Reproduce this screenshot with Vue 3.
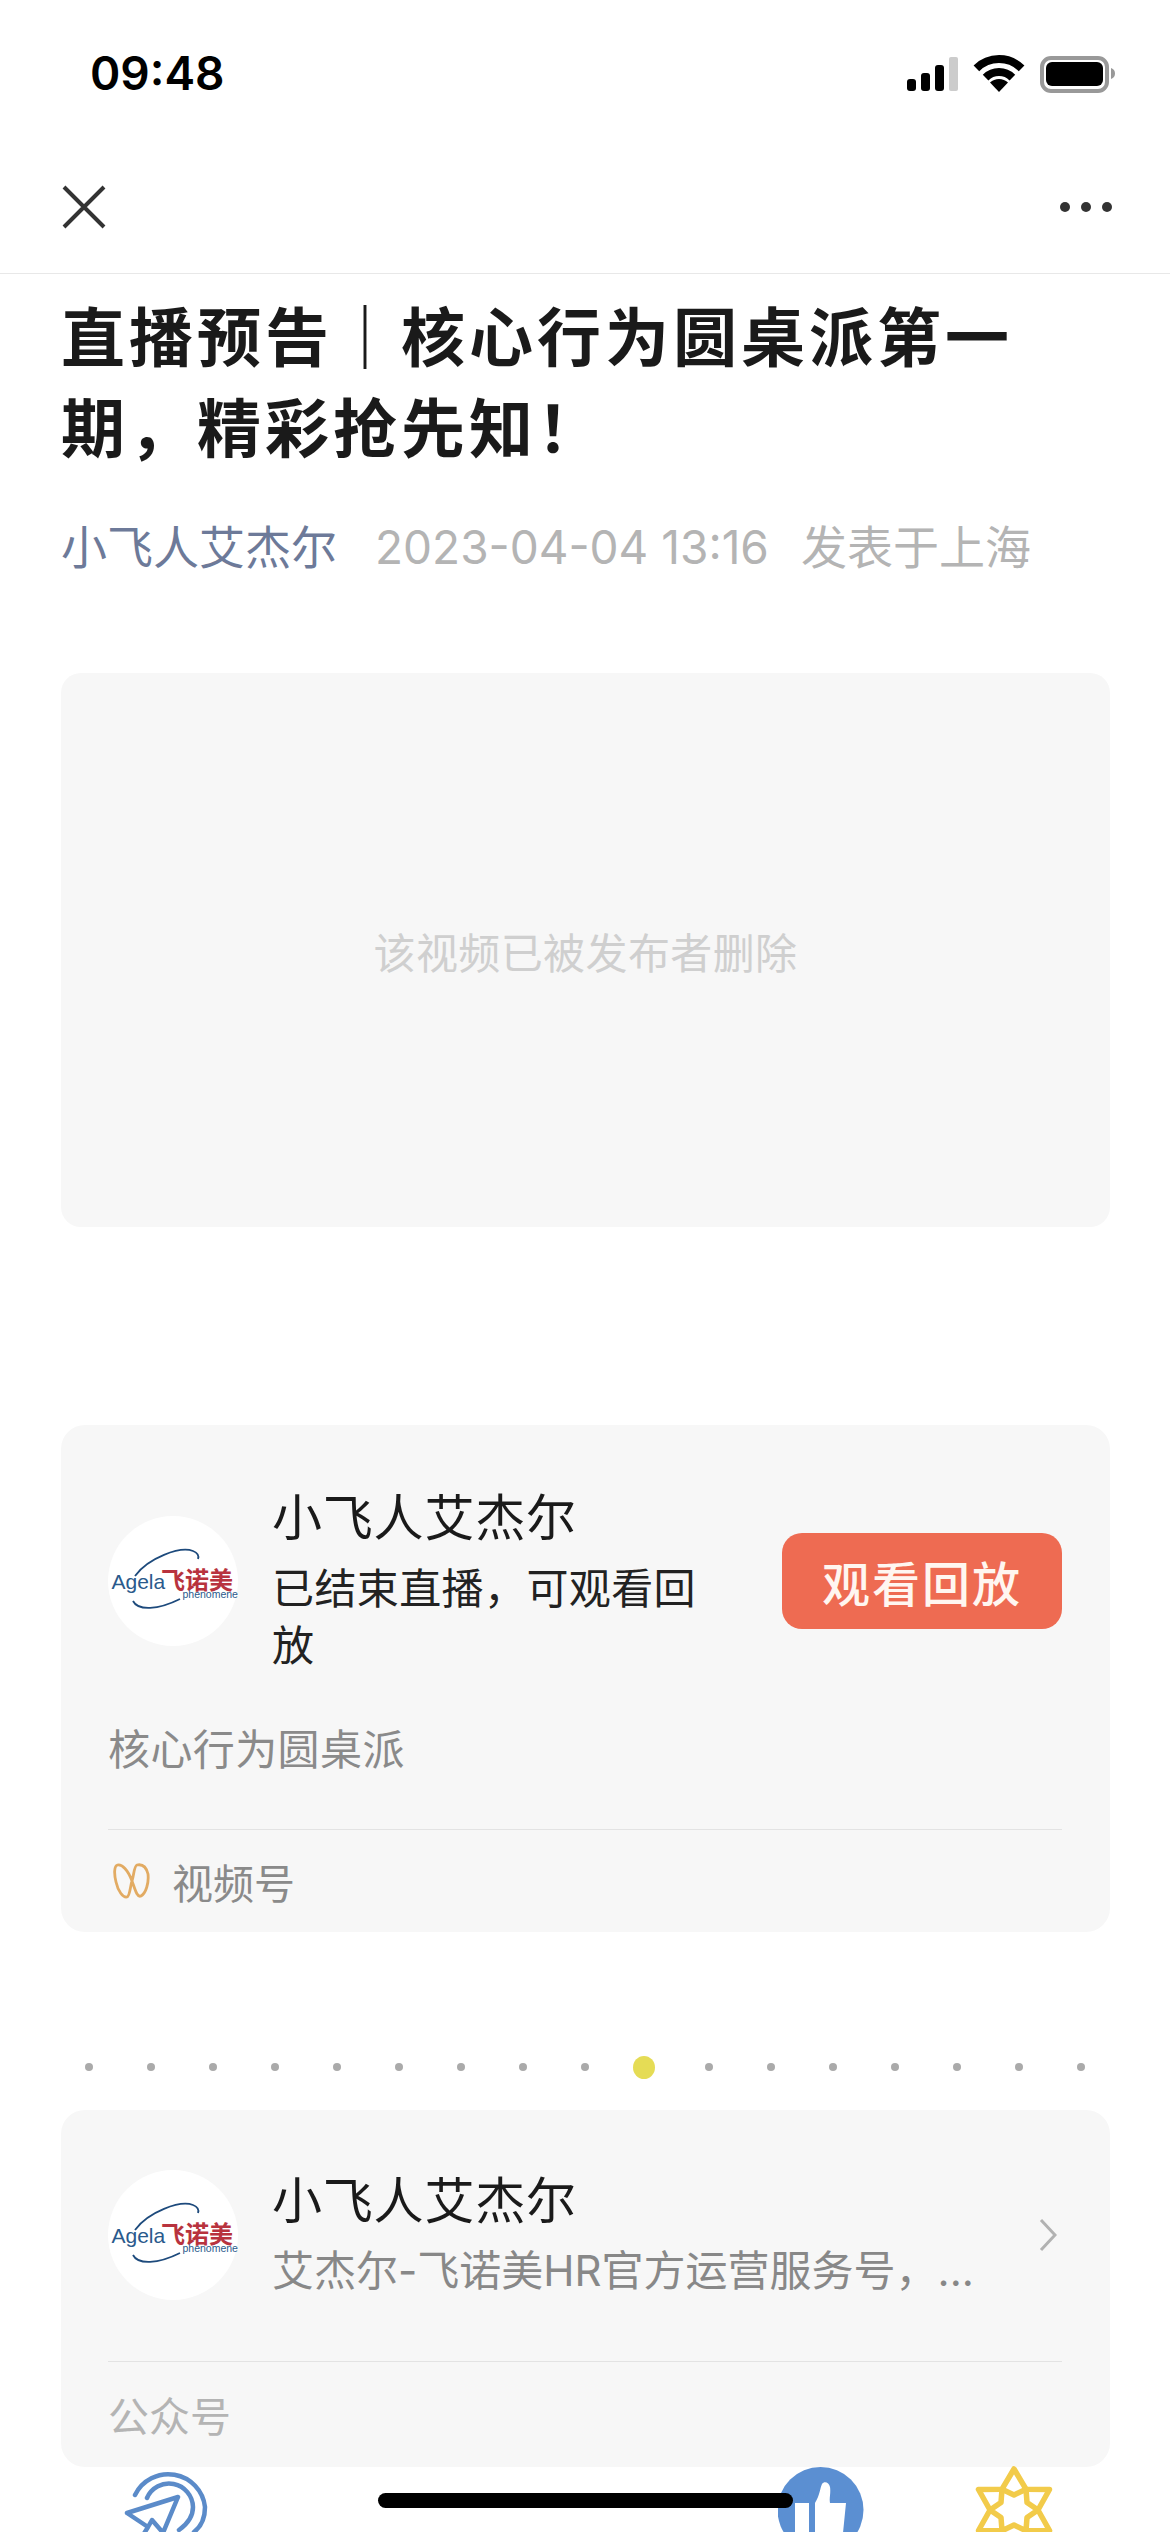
<template>
  <div class="page">
    <!-- status bar -->
    <div class="status">
      <span class="time">09:48</span>
      <svg class="status-icons" width="215" height="46" viewBox="905 50 215 46">
        <rect x="907" y="79" width="9" height="12" rx="3" fill="#000" />
        <rect x="921" y="73" width="9" height="18" rx="3" fill="#000" />
        <rect x="935" y="65" width="9" height="26" rx="3" fill="#000" />
        <rect x="949" y="57" width="9" height="34" rx="2" fill="#ccc" />
        <path d="M976.4 68.4A32 32 0 0 1 1021.6 68.4M985.6 77.6A19 19 0 0 1 1012.4 77.6" fill="none" stroke="#000" stroke-width="8" />
        <path d="M999 92L990 82.5A13 13 0 0 1 1008 82.5Z" fill="#000" />
        <rect x="1042" y="58" width="65" height="33" rx="9" fill="none" stroke="#999" stroke-width="4" />
        <rect x="1046" y="62" width="57" height="24" rx="6" fill="#000" />
        <path d="M1111 68C1114 69 1115 71 1115 73.500C1115 76 1114 78 1111 79Z" fill="#999" />
      </svg>
    </div>

    <!-- nav -->
    <div class="nav">
      <svg width="44" height="44" viewBox="0 0 44 44">
        <path d="M2 2L42 42M42 2L2 42" stroke="#333" stroke-width="4" fill="none" />
      </svg>
      <div class="more">
        <i></i><i></i><i></i>
      </div>
    </div>

    <div class="article">
      <h1 class="title">直播预告｜核心行为圆桌派第一<br />期，精彩抢先知！</h1>
      <div class="meta">
        <span class="author">小飞人艾杰尔</span>
        <span class="date">2023-04-04 13:16</span>
        <span class="place">发表于上海</span>
      </div>

      <div class="video">该视频已被发布者删除</div>

      <div class="card live">
        <div class="card-head">
          <svg class="avatar" viewBox="0 0 130 130">
            <circle cx="65" cy="65" r="65" fill="#fff" />
            <path d="M27 60C40 42 72 30 85 35C90 37 91 40 90 43" fill="none" stroke="#1d4a7c" stroke-width="1.800" />
            <path d="M25 85C30 95 50 94 72 83" fill="none" stroke="#1d4a7c" stroke-width="1.800" />
            <text class="logo-en" x="3.500" y="73">Agela</text>
            <text class="logo-cn" x="53" y="72.500">飞诺美</text>
            <text class="logo-sub" x="74.500" y="81.500">phenomenex</text>
          </svg>
          <div class="info">
            <div class="name">小飞人艾杰尔</div>
            <div class="desc">已结束直播，可观看回放</div>
          </div>
          <div class="replay">观看回放</div>
        </div>
        <div class="topic">核心行为圆桌派</div>
        <div class="card-foot">
          <svg class="channels" width="38" height="36" viewBox="0 0 38 36">
            <path d="M19 18C15 7 9 1 4.500 2C1 3 1 11 3 19C5 28 10 35 14 34C17 33 17 24 19 18C21 12 21 3 24 2C29 1 33 3 35 11C36 20 33 30 28 33C24 35 22 26 19 18Z" fill="none" stroke="#e2ab63" stroke-width="2.800" />
          </svg>
          <span>视频号</span>
        </div>
      </div>

      <div class="dots">
        <i v-for="n in 17" :key="n" :class="{ on: n === 10 }"></i>
      </div>

      <div class="card account">
        <div class="card-head">
          <svg class="avatar" viewBox="0 0 130 130">
            <circle cx="65" cy="65" r="65" fill="#fff" />
            <path d="M27 60C40 42 72 30 85 35C90 37 91 40 90 43" fill="none" stroke="#1d4a7c" stroke-width="1.800" />
            <path d="M25 85C30 95 50 94 72 83" fill="none" stroke="#1d4a7c" stroke-width="1.800" />
            <text class="logo-en" x="3.500" y="73">Agela</text>
            <text class="logo-cn" x="53" y="72.500">飞诺美</text>
            <text class="logo-sub" x="74.500" y="81.500">phenomenex</text>
          </svg>
          <div class="info">
            <div class="name">小飞人艾杰尔</div>
            <div class="intro">艾杰尔-飞诺美HR官方运营服务号，...</div>
          </div>
          <svg class="chevron" width="18" height="34" viewBox="0 0 18 34">
            <path d="M2 2L16 17L2 32" fill="none" stroke="#b2b2b2" stroke-width="3" />
          </svg>
        </div>
        <div class="card-foot muted">公众号</div>
      </div>
    </div>

    <!-- floating buttons, cut off by the screen edge -->
    <div class="dock">
      <svg class="dock-share" width="100" height="72" viewBox="115 2460 100 72">
        <path d="M135 2495A37 37 0 0 1 205 2507C205 2517 202 2526 194 2532" fill="none" stroke="#5b8bc9" stroke-width="4.500" stroke-linecap="round" />
        <path d="M147 2498A24 24 0 0 1 193 2507C193 2517 186 2525 179 2530" fill="none" stroke="#5b8bc9" stroke-width="4.500" stroke-linecap="round" />
        <path d="M178 2497L127 2513L148 2527L140 2540M178 2497L160 2540M148 2527L152 2520L165 2535" fill="none" stroke="#5b8bc9" stroke-width="4.500" stroke-linejoin="round" stroke-linecap="round" />
      </svg>
      <svg class="dock-like" width="86" height="66" viewBox="778 2466 86 66">
        <circle cx="820.500" cy="2510" r="43" fill="#5b8fd2" />
        <rect x="795" y="2503" width="14" height="30" fill="#fff" />
        <path d="M815 2533V2503C820 2495 820 2488 822 2484C824 2481 829 2482 830 2487C831 2493 829 2498 830 2503H846L843 2533Z" fill="#fff" />
      </svg>
      <svg class="dock-star" width="84" height="66" viewBox="972 2466 84 66">
        <path d="M1014 2469L1026 2489.200L1049.500 2489.500L1038 2510L1049.500 2530.500L1026 2530.800L1014 2551L1002 2530.800L978.500 2530.500L990 2510L978.500 2489.500L1002 2489.200Z" fill="none" stroke="#f2cb4a" stroke-width="5.500" stroke-linejoin="round" />
        <path d="M1002 2489.200L1014 2495L1026 2489.200L1027 2502.500L1038 2510L1027 2517.500L1026 2530.800L1014 2525L1002 2530.800L1001 2517.500L990 2510L1001 2502.500Z" fill="none" stroke="#f2cb4a" stroke-width="5.500" stroke-linejoin="round" />
      </svg>
    </div>

    <div class="home-bar"></div>
  </div>
</template>

<script setup>
</script>

<style>
html,
body {
  background: #fff;
}
</style>

<style scoped>
.page {
  position: relative;
  width: 1170px;
  height: 2532px;
  overflow: hidden;
  background: #fff;
  font-family: Inter, "Noto Sans CJK SC", sans-serif;
  color: #1a1a1a;
}

.status {
  height: 140px;
  display: flex;
  justify-content: space-between;
  align-items: flex-start;
  padding: 44px 50px 0 90px;
  box-sizing: border-box;
}

.time {
  font-size: 46px;
  line-height: 58px;
  font-weight: 600;
  color: #000;
}

.status-icons {
  margin-top: 6px;
}

.nav {
  height: 133px;
  display: flex;
  align-items: center;
  justify-content: space-between;
  padding: 0 58px 0 62px;
  border-bottom: 1px solid #e8e8e8;
}

.more {
  display: flex;
  gap: 11px;
}

.more i {
  width: 10px;
  height: 10px;
  border-radius: 50%;
  background: #333;
}

.article {
  padding: 0 60px 0 61px;
}

.title {
  margin: 18px 0 0;
  font-size: 64px;
  line-height: 91px;
  font-weight: 700;
  letter-spacing: 4px;
  color: #1a1a1a;
}

.meta {
  margin-top: 43px;
  display: flex;
  font-size: 46px;
  line-height: 60px;
  white-space: nowrap;
}

.author {
  color: #6d7a99;
}

.date {
  margin-left: 38px;
  color: #b4b4b4;
}

.place {
  margin-left: 32px;
  color: #b4b4b4;
}

.video {
  margin-top: 96px;
  height: 554px;
  border-radius: 20px;
  background: #f7f7f7;
  display: flex;
  align-items: center;
  justify-content: center;
  font-size: 42px;
  letter-spacing: 0.4px;
  color: #cfcfcf;
}

.card {
  border-radius: 24px;
  background: #f7f7f7;
  padding: 0 48px 0 47px;
}

.live {
  margin-top: 198px;
  height: 507px;
  padding-top: 63px;
  box-sizing: border-box;
}

.account {
  margin-top: 31px;
  height: 357px;
  padding-top: 60px;
  box-sizing: border-box;
}

.card-head {
  display: flex;
  align-items: center;
}

.avatar {
  flex: none;
  width: 130px;
  height: 130px;
  margin-right: 34px;
}

.logo-en {
  font-family: "Liberation Sans", sans-serif;
  font-size: 21px;
  fill: #2a5a8c;
}

.logo-cn {
  font-family: "Noto Sans CJK SC", sans-serif;
  font-size: 24px;
  font-weight: 700;
  fill: #b8333e;
}

.logo-sub {
  font-family: "Liberation Sans", sans-serif;
  font-size: 10.500px;
  fill: #2a5a8c;
}

.info {
  flex: 1;
  min-width: 0;
}

.name {
  font-size: 50px;
  line-height: 60px;
  letter-spacing: 0.8px;
  color: #1a1a1a;
}

.desc {
  margin-top: 12px;
  margin-right: 60px;
  font-size: 42px;
  line-height: 57px;
  letter-spacing: 0.4px;
  color: #222;
}

.intro {
  margin-top: 11px;
  font-size: 42px;
  line-height: 57px;
  white-space: nowrap;
  color: #888;
}

.replay {
  flex: none;
  width: 280px;
  height: 96px;
  border-radius: 20px;
  background: #ee6b52;
  color: #fff6f0;
  font-size: 48px;
  font-weight: 500;
  letter-spacing: 2px;
  display: flex;
  align-items: center;
  justify-content: center;
}

.chevron {
  flex: none;
  margin: 0 5px 0 auto;
}

.topic {
  margin-top: 46px;
  font-size: 42px;
  line-height: 60px;
  letter-spacing: 0.4px;
  color: #8a8a8a;
}

.card-foot {
  margin-top: 49px;
  height: 102px;
  border-top: 1px solid #e3e3e3;
  display: flex;
  align-items: center;
  font-size: 41px;
  color: #8a8a8a;
}

.channels {
  margin: 0 21px 0 5px;
}

.muted {
  margin-top: 61px;
  height: 103px;
  color: #b4b4b4;
}

.dots {
  margin-top: 123px;
  height: 24px;
  padding-left: 24px;
  display: flex;
  align-items: center;
  gap: 54px;
}

.dots i {
  flex: none;
  width: 8px;
  height: 8px;
  border-radius: 50%;
  background: #aaa;
}

.dots i.on {
  width: 22px;
  height: 23px;
  margin: 0 -4px 0 -10px;
  background: #e5dc55;
}

.dock {
  position: absolute;
  left: 0;
  right: 0;
  bottom: 0;
  height: 72px;
  display: flex;
  align-items: flex-end;
}

.dock-share {
  margin-left: 115px;
}

.dock-like {
  margin-left: 563px;
}

.dock-star {
  margin-left: 108px;
}

.home-bar {
  position: absolute;
  left: 378px;
  top: 2493px;
  width: 415px;
  height: 15px;
  border-radius: 8px;
  background: #000;
}
</style>
